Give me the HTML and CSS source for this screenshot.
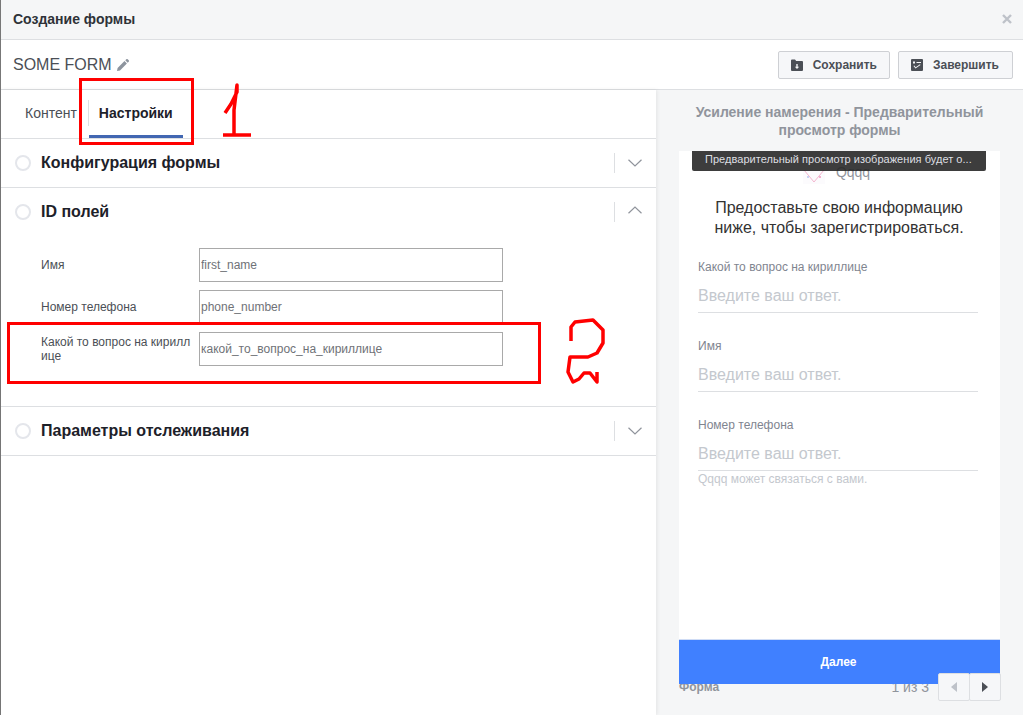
FILE: index.html
```html
<!DOCTYPE html>
<html lang="ru">
<head>
    <meta charset="UTF-8">
    <title>Создание формы</title>
    <link rel="stylesheet" href="styles.css">
</head>
<body>
    <div class="dialog">
        <header class="dialog-head">
            <h1 class="dialog-title">Создание формы</h1>
            <svg class="dialog-close" viewBox="0 0 10 10"><path d="M1 1l8 8M9 1l-8 8"/></svg>
        </header>

        <div class="toolbar">
            <div class="form-name">
                <span>SOME FORM</span>
                <svg class="pencil" viewBox="0 0 12 12"><path d="M0 12l.6-3L7.5 2.100l2.400 2.400L3 11.400zM8.300 1.300L9.300.3a1 1 0 0 1 1.400 0l1 1a1 1 0 0 1 0 1.400l-1 1z"/></svg>
            </div>
            <div class="toolbar-actions">
                <button class="btn">
                    <svg class="btn-icon" viewBox="0 0 12 12"><path fill-rule="evenodd" d="M0 1.500A1 1 0 0 1 1 .5h3l1.200 1.500H11a1 1 0 0 1 1 1V11a1 1 0 0 1-1 1H1a1 1 0 0 1-1-1zM5.300 5v2.800H3.800L6 10l2.200-2.200H6.700V5z"/></svg>
                    Сохранить
                </button>
                <button class="btn">
                    <svg class="btn-icon" viewBox="0 0 12 12"><path fill-rule="evenodd" d="M1 0h10a1 1 0 0 1 1 1v10a1 1 0 0 1-1 1H1a1 1 0 0 1-1-1V1a1 1 0 0 1 1-1zM2 2.500v2h2v-2zM5.500 3v1H10V3zM2.500 7L4.500 9.500 9.500 6 9 5.300 4.700 8.200 3.300 6.400z"/></svg>
                    Завершить
                </button>
            </div>
        </div>

        <div class="dialog-body">
            <main class="editor">
                <nav class="tabs">
                    <span class="tab">Контент</span>
                    <span class="tab tab-active">Настройки</span>
                </nav>

                <section class="section">
                    <div class="section-head">
                        <span class="section-check"></span>
                        <h2 class="section-title">Конфигурация формы</h2>
                        <span class="section-toggle">
                            <svg class="chevron" viewBox="0 0 14 8"><path d="M.5.7L7 7 13.500.7"/></svg>
                        </span>
                    </div>
                </section>

                <section class="section">
                    <div class="section-head">
                        <span class="section-check"></span>
                        <h2 class="section-title">ID полей</h2>
                        <span class="section-toggle">
                            <svg class="chevron chevron-up" viewBox="0 0 14 8"><path d="M.5 7.300L7 1l6.500 6.300"/></svg>
                        </span>
                    </div>
                    <div class="fields">
                        <div class="field-row">
                            <label class="field-label">Имя</label>
                            <input class="field-input" value="first_name">
                        </div>
                        <div class="field-row">
                            <label class="field-label">Номер телефона</label>
                            <input class="field-input" value="phone_number">
                        </div>
                        <div class="field-row">
                            <label class="field-label">Какой то вопрос на кириллице</label>
                            <input class="field-input" value="какой_то_вопрос_на_кириллице">
                        </div>
                    </div>
                </section>

                <section class="section">
                    <div class="section-head">
                        <span class="section-check"></span>
                        <h2 class="section-title">Параметры отслеживания</h2>
                        <span class="section-toggle">
                            <svg class="chevron" viewBox="0 0 14 8"><path d="M.5.7L7 7 13.500.7"/></svg>
                        </span>
                    </div>
                </section>
            </main>

            <aside class="preview">
                <h2 class="preview-title">Усиление намерения - Предварительный просмотр формы</h2>
                <div class="preview-card">
                    <div class="preview-tip">Предварительный просмотр изображения будет о...</div>
                    <div class="brand">
                        <svg class="brand-logo" viewBox="0 0 22 24">
                            <rect width="22" height="24" fill="#fcfbfd"/>
                            <path d="M1 10l10 12 10-12" fill="none" stroke="#f4b6cf" stroke-width="1"/>
                            <circle cx="5" cy="17" r="1" fill="#b9c6f2"/>
                            <circle cx="17" cy="17" r="1" fill="#f29ac0"/>
                        </svg>
                        <span class="brand-name">Qqqq</span>
                    </div>
                    <p class="preview-lead">Предоставьте свою информацию ниже, чтобы зарегистрироваться.</p>
                    <div class="question">
                        <div class="question-label">Какой то вопрос на кириллице</div>
                        <div class="question-answer">Введите ваш ответ.</div>
                    </div>
                    <div class="question">
                        <div class="question-label">Имя</div>
                        <div class="question-answer">Введите ваш ответ.</div>
                    </div>
                    <div class="question">
                        <div class="question-label">Номер телефона</div>
                        <div class="question-answer">Введите ваш ответ.</div>
                    </div>
                    <div class="preview-note">Qqqq может связаться с вами.</div>
                    <div class="preview-next">Далее</div>
                </div>
                <div class="preview-foot">
                    <span class="foot-name">Форма</span>
                    <span class="foot-count">1 из 3</span>
                    <div class="pager">
                        <span class="pager-btn"><i class="arrow arrow-prev"></i></span>
                        <span class="pager-btn"><i class="arrow arrow-next"></i></span>
                    </div>
                </div>
            </aside>
        </div>
    </div>

    <!-- пометки поверх скриншота -->
    <div class="mark mark-tab"></div>
    <div class="mark mark-row"></div>
    <svg class="scribble" viewBox="0 0 1023 715">
        <path d="M225 113L231 104 237 92 237 85 234 110 234 135M223 135H251"/>
        <path d="M571 341V327L575 322 593 320 603 330 603 343 597 353 588 357 570 357 568 372 573 382 579 379 584 373 590 373 597 382 597 372"/>
    </svg>
</body>
</html>
```

FILE: styles.css
```css
* {
    margin: 0;
    padding: 0;
    box-sizing: border-box;
}

body {
    font-family: "Liberation Sans", Arial, sans-serif;
    background: #fff;
    color: #1d2129;
    overflow: hidden;
}

.dialog {
    display: flex;
    flex-direction: column;
    height: 715px;
    border-left: 1px solid #777;
}

/* Шапка */
.dialog-head {
    display: flex;
    align-items: center;
    justify-content: space-between;
    flex: none;
    height: 40px;
    padding: 0 11px 1px 12px;
    background: #f5f6f7;
    border-bottom: 1px solid #dddfe2;
}

.dialog-title {
    font-size: 14px;
    font-weight: bold;
    color: #2e3238;
}

.dialog-close {
    width: 10px;
    height: 10px;
    fill: none;
    stroke: #bec2c9;
    stroke-width: 2.4;
}

/* Панель с кнопками */
.toolbar {
    display: flex;
    align-items: center;
    justify-content: space-between;
    flex: none;
    height: 50px;
    padding: 0 10px 0 12px;
    border-bottom: 1px solid #dddfe2;
}

.form-name {
    display: flex;
    align-items: center;
    gap: 5px;
    font-size: 16px;
    color: #4b4f56;
}

.pencil {
    width: 12px;
    height: 12px;
    fill: #8d949e;
}

.toolbar-actions {
    display: flex;
    gap: 8px;
}

.btn {
    display: flex;
    align-items: center;
    gap: 10px;
    height: 28px;
    padding: 0 12px;
    font-family: inherit;
    font-size: 12px;
    font-weight: bold;
    color: #4b4f56;
    background: #f6f7f9;
    border: 1px solid #ced0d4;
    border-radius: 2px;
}

.btn + .btn {
    padding-right: 13px;
}

.btn-icon {
    width: 12px;
    height: 12px;
    fill: #4b4f56;
}

.dialog-body {
    display: flex;
    flex: 1;
    min-height: 0;
}

/* Левая колонка */
.editor {
    flex: none;
    width: 655px;
    background: #fff;
    position: relative;
    z-index: 1;
    box-shadow: 1px 0 4px rgba(0,0,0,0.08);
}

.tabs {
    display: flex;
    align-items: flex-start;
    height: 49px;
    padding-left: 24px;
    border-bottom: 1px solid #dddfe2;
}

.tab {
    margin-top: 10px;
    height: 26px;
    padding-right: 12px;
    font-size: 14px;
    line-height: 26px;
    color: #4b4f56;
}

.tab-active {
    height: 38px;
    margin-top: 10px;
    padding: 0 10px;
    font-weight: bold;
    color: #1d2129;
    border-bottom: 3px solid #4267b2;
    position: relative;
}

.tab-active::before {
    content: "";
    position: absolute;
    left: -1px;
    top: 0;
    width: 1px;
    height: 26px;
    background: #dddfe2;
}

.section {
    border-bottom: 1px solid #dddfe2;
}

.section-head {
    display: flex;
    align-items: center;
    height: 48px;
    padding-left: 14px;
}

.section-check {
    flex: none;
    width: 16px;
    height: 16px;
    margin-right: 10px;
    border: 2px solid #e4e6eb;
    border-radius: 50%;
}

.section-title {
    flex: 1;
    font-size: 16px;
    font-weight: bold;
    color: #1d2129;
}

.section-toggle {
    display: flex;
    align-items: center;
    justify-content: flex-end;
    width: 42px;
    height: 20px;
    padding-right: 14px;
    border-left: 1px solid #dddfe2;
}

.chevron {
    width: 14px;
    height: 8px;
    fill: none;
    stroke: #90949c;
    stroke-width: 1.2;
}

.chevron-up {
    margin-bottom: 4px;
}

/* ID полей */
.fields {
    display: flex;
    flex-direction: column;
    gap: 8px;
    padding: 12px 0 40px 40px;
}

.field-row {
    display: flex;
    align-items: center;
}

.field-label {
    flex: none;
    width: 158px;
    padding-right: 8px;
    font-size: 12px;
    line-height: 14px;
    color: #4b4f56;
    word-break: break-all;
}

.field-input {
    width: 304px;
    height: 34px;
    padding: 0 1px;
    font-family: inherit;
    font-size: 12px;
    color: #6f7277;
    border: 1px solid #a9a9a9;
    outline: none;
}

/* Правая колонка */
.preview {
    flex: 1;
    display: flex;
    flex-direction: column;
    padding: 0 23px 0 23px;
    background: #f5f6f7;
}

.preview-title {
    flex: none;
    height: 61px;
    padding: 13px 10px 0;
    font-size: 14px;
    line-height: 18px;
    font-weight: bold;
    text-align: center;
    color: #90949c;
}

.preview-card {
    display: flex;
    flex-direction: column;
    flex: none;
    height: 533px;
    background: #fff;
    position: relative;
    z-index: 1;
}

.preview-tip {
    position: absolute;
    left: 13px;
    top: 0;
    width: 294px;
    height: 20px;
    padding: 0 13px;
    font-size: 11px;
    line-height: 17px;
    letter-spacing: 0.04px;
    white-space: nowrap;
    color: #dddfe2;
    background: rgba(40,40,40,0.9);
    border-radius: 0 0 2px 2px;
}

.brand {
    display: flex;
    align-items: center;
    justify-content: center;
    height: 24px;
    margin-top: 9px;
    padding-right: 6px;
    gap: 11px;
}

.brand-logo {
    width: 22px;
    height: 24px;
}

.brand-name {
    font-size: 14px;
    color: #90949c;
}

.preview-lead {
    margin-top: 14px;
    padding: 0 33px 0 32px;
    font-size: 16px;
    line-height: 20px;
    text-align: center;
    color: #333;
}

.question {
    margin: 0 22px 0 19px;
    height: 79px;
    padding-top: 22px;
}

.question-label {
    font-size: 12px;
    line-height: 14px;
    color: #7f8590;
}

.question-answer {
    height: 31px;
    margin-top: 8px;
    font-size: 16px;
    line-height: 28px;
    color: #c4c8ce;
    border-bottom: 1px solid #dddfe2;
}

.preview-note {
    margin: -3px 22px 0 19px;
    font-size: 12px;
    line-height: 14px;
    color: #c4c8ce;
}

.preview-next {
    margin-top: auto;
    height: 44px;
    padding-right: 2px;
    font-size: 12px;
    font-weight: bold;
    line-height: 44px;
    text-align: center;
    color: #fff;
    background: #4080ff;
    box-shadow: 0 -1px 0 #cfdcf5;
}

.preview-foot {
    display: flex;
    align-items: center;
    margin-top: -11px;
    height: 28px;
}

.foot-name {
    flex: 1;
    font-size: 12px;
    font-weight: bold;
    color: #90949c;
}

.foot-count {
    font-size: 14px;
    color: #90949c;
    margin-right: 9px;
}

.pager {
    display: flex;
    position: relative;
    z-index: 2;
    margin-right: -1px;
}

.pager-btn {
    display: flex;
    align-items: center;
    justify-content: center;
    width: 32px;
    height: 28px;
    background: #f6f7f9;
    border: 1px solid #dddfe2;
    border-radius: 2px;
}

.pager-btn + .pager-btn {
    margin-left: -1px;
}

.arrow {
    display: block;
    width: 0;
    height: 0;
    border-top: 5px solid transparent;
    border-bottom: 5px solid transparent;
}

.arrow-prev {
    border-right: 6px solid #bec2c9;
}

.arrow-next {
    border-left: 6px solid #4b4f56;
}

/* Красные пометки */
.mark {
    position: absolute;
    border: 3px solid #f00;
    z-index: 5;
}

.mark-tab {
    left: 79px;
    top: 78px;
    width: 115px;
    height: 67px;
}

.mark-row {
    left: 7px;
    top: 322px;
    width: 534px;
    height: 62px;
}

.scribble {
    position: absolute;
    left: 0;
    top: 0;
    width: 1023px;
    height: 715px;
    z-index: 5;
    fill: none;
    stroke: #f00;
    stroke-width: 3.5;
    stroke-linejoin: round;
    pointer-events: none;
}
```
